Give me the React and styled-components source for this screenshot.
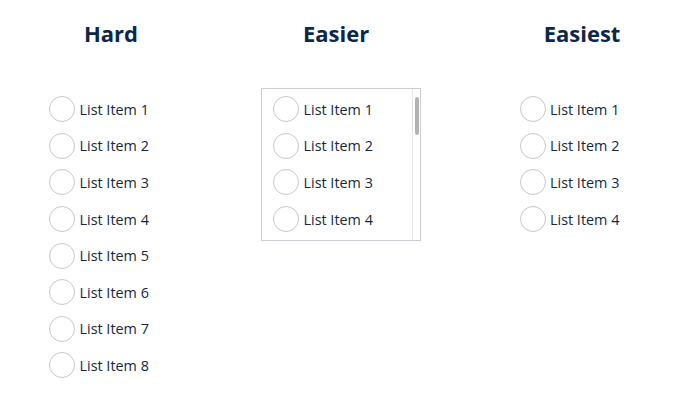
import React from "react";
import styled, { createGlobalStyle } from "styled-components";

const Global = createGlobalStyle`
  html, body { margin: 0; padding: 0; background: #ffffff; }
  body { font-family: "Open Sans", "Noto Sans", sans-serif; }
`;

const Page = styled.div`
  display: flex;
  width: 700px;
  height: 409px;
  overflow: hidden;
`;

const Column = styled.section`
  display: flex;
  flex-direction: column;
  width: ${(p) => p.$width}px;
  padding-left: ${(p) => p.$pad || 0}px;
  box-sizing: border-box;
`;

const Title = styled.h2`
  margin: 18px 0 0;
  height: 73px;
  text-align: center;
  font-size: 22px;
  font-weight: 700;
  line-height: 30px;
  color: #0d2746;
`;

const List = styled.ul`
  list-style: none;
  margin: 0 0 0 ${(p) => p.$indent}px;
  padding: 0;
`;

const Box = styled.div`
  display: flex;
  margin: -3px 0 0 ${(p) => p.$indent}px;
  width: 160px;
  height: 153px;
  box-sizing: border-box;
  border: 1.5px solid #c9ced6;
`;

const BoxList = styled.ul`
  list-style: none;
  flex: 1;
  margin: 0;
  padding: 2px 0 0 11px;
  overflow: hidden;
`;

const Track = styled.div`
  flex: none;
  width: 8px;
  border-left: 1px solid #e2e5ea;
  padding: 8px 1.5px 0 2px;
  box-sizing: border-box;
`;

const Thumb = styled.div`
  height: 38px;
  border-radius: 3px;
  background: #b3b3b3;
`;

const Item = styled.li`
  display: flex;
  align-items: center;
  gap: 4.5px;
  height: 36.6px;
  font-size: 14.4px;
  color: #152740;
  white-space: nowrap;
`;

const Radio = styled.span`
  flex: none;
  width: 26px;
  height: 26px;
  box-sizing: border-box;
  border-radius: 50%;
  border: 1.5px solid #c4c8cf;
  background: #fff;
`;

const range = (n) => Array.from({ length: n }, (_, i) => i + 1);

const Row = ({ n }) => (
  <Item>
    <Radio />
    List Item {n}
  </Item>
);

export default function App() {
  return (
    <>
      <Global />
      <Page>
        <Column $width={222}>
          <Title>Hard</Title>
          <List $indent={49}>
            {range(8).map((n) => (
              <Row key={n} n={n} />
            ))}
          </List>
        </Column>
        <Column $width={228}>
          <Title>Easier</Title>
          <Box $indent={39}>
            <BoxList>
              {range(4).map((n) => (
                <Row key={n} n={n} />
              ))}
            </BoxList>
            <Track>
              <Thumb />
            </Track>
          </Box>
        </Column>
        <Column $width={250} $pad={14}>
          <Title>Easiest</Title>
          <List $indent={55.5}>
            {range(4).map((n) => (
              <Row key={n} n={n} />
            ))}
          </List>
        </Column>
      </Page>
    </>
  );
}
